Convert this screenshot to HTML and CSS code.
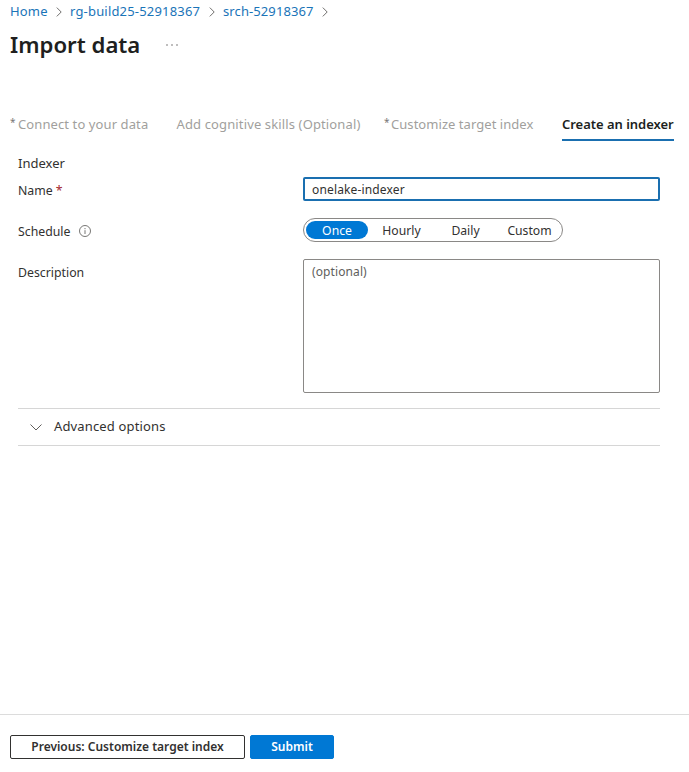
FILE: index.html
```html
<!DOCTYPE html>
<html lang="en">
<head>
<meta charset="utf-8">
<title>Import data</title>
<link rel="stylesheet" href="styles.css">
</head>
<body>
<div class="page">
  <nav class="breadcrumb">
    <a class="crumb-home">Home</a>
    <svg class="sep" viewBox="0 0 6 10"><path d="M.8.6 5.2 5 .8 9.400"/></svg>
    <a class="crumb-group">rg-build25-52918367</a>
    <svg class="sep" viewBox="0 0 6 10"><path d="M.8.6 5.2 5 .8 9.400"/></svg>
    <a class="crumb-service">srch-52918367</a>
    <svg class="sep" viewBox="0 0 6 10"><path d="M.8.6 5.2 5 .8 9.400"/></svg>
  </nav>
  <header class="title-row">
    <h1>Import data</h1>
    <svg class="more" viewBox="0 0 12 2"><circle cx="1" cy="1" r=".75"/><circle cx="6" cy="1" r=".75"/><circle cx="11" cy="1" r=".75"/></svg>
  </header>
  <div class="tabs">
    <div class="tab tab-connect"><span class="star">*</span><span>Connect to your data</span></div>
    <div class="tab tab-skills"><span>Add cognitive skills (Optional)</span></div>
    <div class="tab tab-index"><span class="star">*</span><span>Customize target index</span></div>
    <div class="tab tab-indexer active"><span>Create an indexer</span></div>
  </div>
  <main class="form">
    <div class="section">Indexer</div>
    <div class="row name-row">
      <label>Name <span class="required">*</span></label>
      <div class="input"><span>onelake-indexer</span></div>
    </div>
    <div class="row schedule-row">
      <label>Schedule
        <svg class="info" viewBox="0 0 12 12"><circle cx="6" cy="6" r="5.500"/><path d="M6 5.200V9M6 3v1.200"/></svg>
      </label>
      <div class="pills">
        <span class="pill once">Once</span>
        <span class="pill hourly">Hourly</span>
        <span class="pill daily">Daily</span>
        <span class="pill custom">Custom</span>
      </div>
    </div>
    <div class="row description-row">
      <label>Description</label>
      <div class="textarea"><span>(optional)</span></div>
    </div>
    <div class="advanced">
      <svg viewBox="0 0 12 7"><path d="M.5.500 6 6 11.500.500"/></svg>
      <span>Advanced options</span>
    </div>
  </main>
  <footer>
    <div class="button previous"><span>Previous: Customize target index</span></div>
    <div class="button submit"><span>Submit</span></div>
  </footer>
</div>
</body>
</html>
```
FILE: styles.css
```css
* { box-sizing: border-box; }
body {
  margin: 0;
  background: #fff;
  color: #323130;
  font: 13px/18px "Noto Sans", "Open Sans", sans-serif;
  white-space: nowrap;
}
svg { display: block; flex: none; fill: none; stroke: #605e5c; }
.page { height: 772px; display: flex; flex-direction: column; overflow: hidden; }
.breadcrumb { display: flex; align-items: center; height: 23px; padding-left: 10px; color: #1a74b8; }
.breadcrumb a { display: block; flex: none; height: 20px; letter-spacing: .18px; }
.sep { width: 6px; height: 10px; margin: 1px 8px 0; stroke-width: .9; }
.crumb-home { width: 38px; }
.crumb-group { width: 131px; }
.breadcrumb .crumb-service { width: 91px; letter-spacing: .1px; }
.title-row { display: flex; align-items: center; height: 44px; padding-left: 10px; }
h1 { margin: 0; width: 130px; font-size: 22.2px; line-height: 32px; font-weight: 600; color: #201f1e; }
.more { width: 12px; height: 2px; margin: 0 0 0 26px; fill: #605e5c; stroke: none; }
.tabs { display: flex; height: 33px; margin-top: 41px; padding-left: 10px; column-gap: 28px; color: #a19f9d; letter-spacing: .1px; }
.tab { display: flex; flex: none; height: 33px; line-height: 32px; }
.star { flex: none; width: 8px; font-size: 10px; line-height: 29px; color: #797775; }
.tab-connect { width: 138.5px; }
.tab-skills { width: 179.5px; letter-spacing: .13px; }
.tab-index { width: 150px; letter-spacing: .05px; }
.tab-index .star { width: 7px; }
.tab-indexer { width: 112px; letter-spacing: -.03px; }
.active { font-weight: 600; color: #201f1e; border-bottom: 2px solid #1a6fb0; }
.form { padding: 13px 29px 0 18px; }
.section { height: 18px; }
.row { display: grid; grid-template-columns: 285px 357px; }
.row label { display: flex; align-items: center; height: 27px; padding-top: 1px; font-size: 12.3px; }
.name-row { height: 24px; margin-top: 5px; }
.required { margin-left: 3px; color: #a4262c; }
.input { height: 24px; padding: 0 7px; border: 2px solid #1a6fb0; border-radius: 2px; font-size: 12px; line-height: 21px; letter-spacing: .15px; }
.schedule-row { height: 24px; margin-top: 17px; }
.info { width: 12px; height: 12px; margin: -2px 0 0 9px; stroke-width: .85; }
.pills { display: flex; width: 260px; height: 24px; padding: 2px; border: 1px solid #8a8886; border-radius: 12px; font-size: 12.200px; line-height: 20px; }
.pill { flex: none; text-align: center; height: 18px; }
.once { width: 62px; background: #0078d4; color: #fff; border-radius: 9px; }
.hourly { width: 67px; }
.daily { width: 61px; }
.custom { width: 67px; }
.description-row { margin-top: 17px; }
.textarea { height: 134px; padding: 3px 8px; border: 1px solid #8a8886; border-radius: 2px; color: #605e5c; font-size: 12px; letter-spacing: .1px; }
.advanced { display: flex; align-items: center; height: 38px; margin-top: 15px; padding: 0 0 2px 12px; border: solid #d6d6d6; border-width: 1px 0; letter-spacing: .15px; }
.advanced svg { width: 12px; height: 7px; margin: 2px 12px 0 0; }
footer { display: flex; height: 58px; margin-top: auto; padding: 20px 10px 0; gap: 5px; border-top: 1px solid #dcdcdc; }
.button { height: 24px; border-radius: 2px; text-align: center; font-size: 12px; line-height: 22px; font-weight: 600; border: 1px solid #323130; }
.previous { width: 235px; }
.submit { width: 84px; background: #0078d4; border-color: #0078d4; color: #fff; }
```
